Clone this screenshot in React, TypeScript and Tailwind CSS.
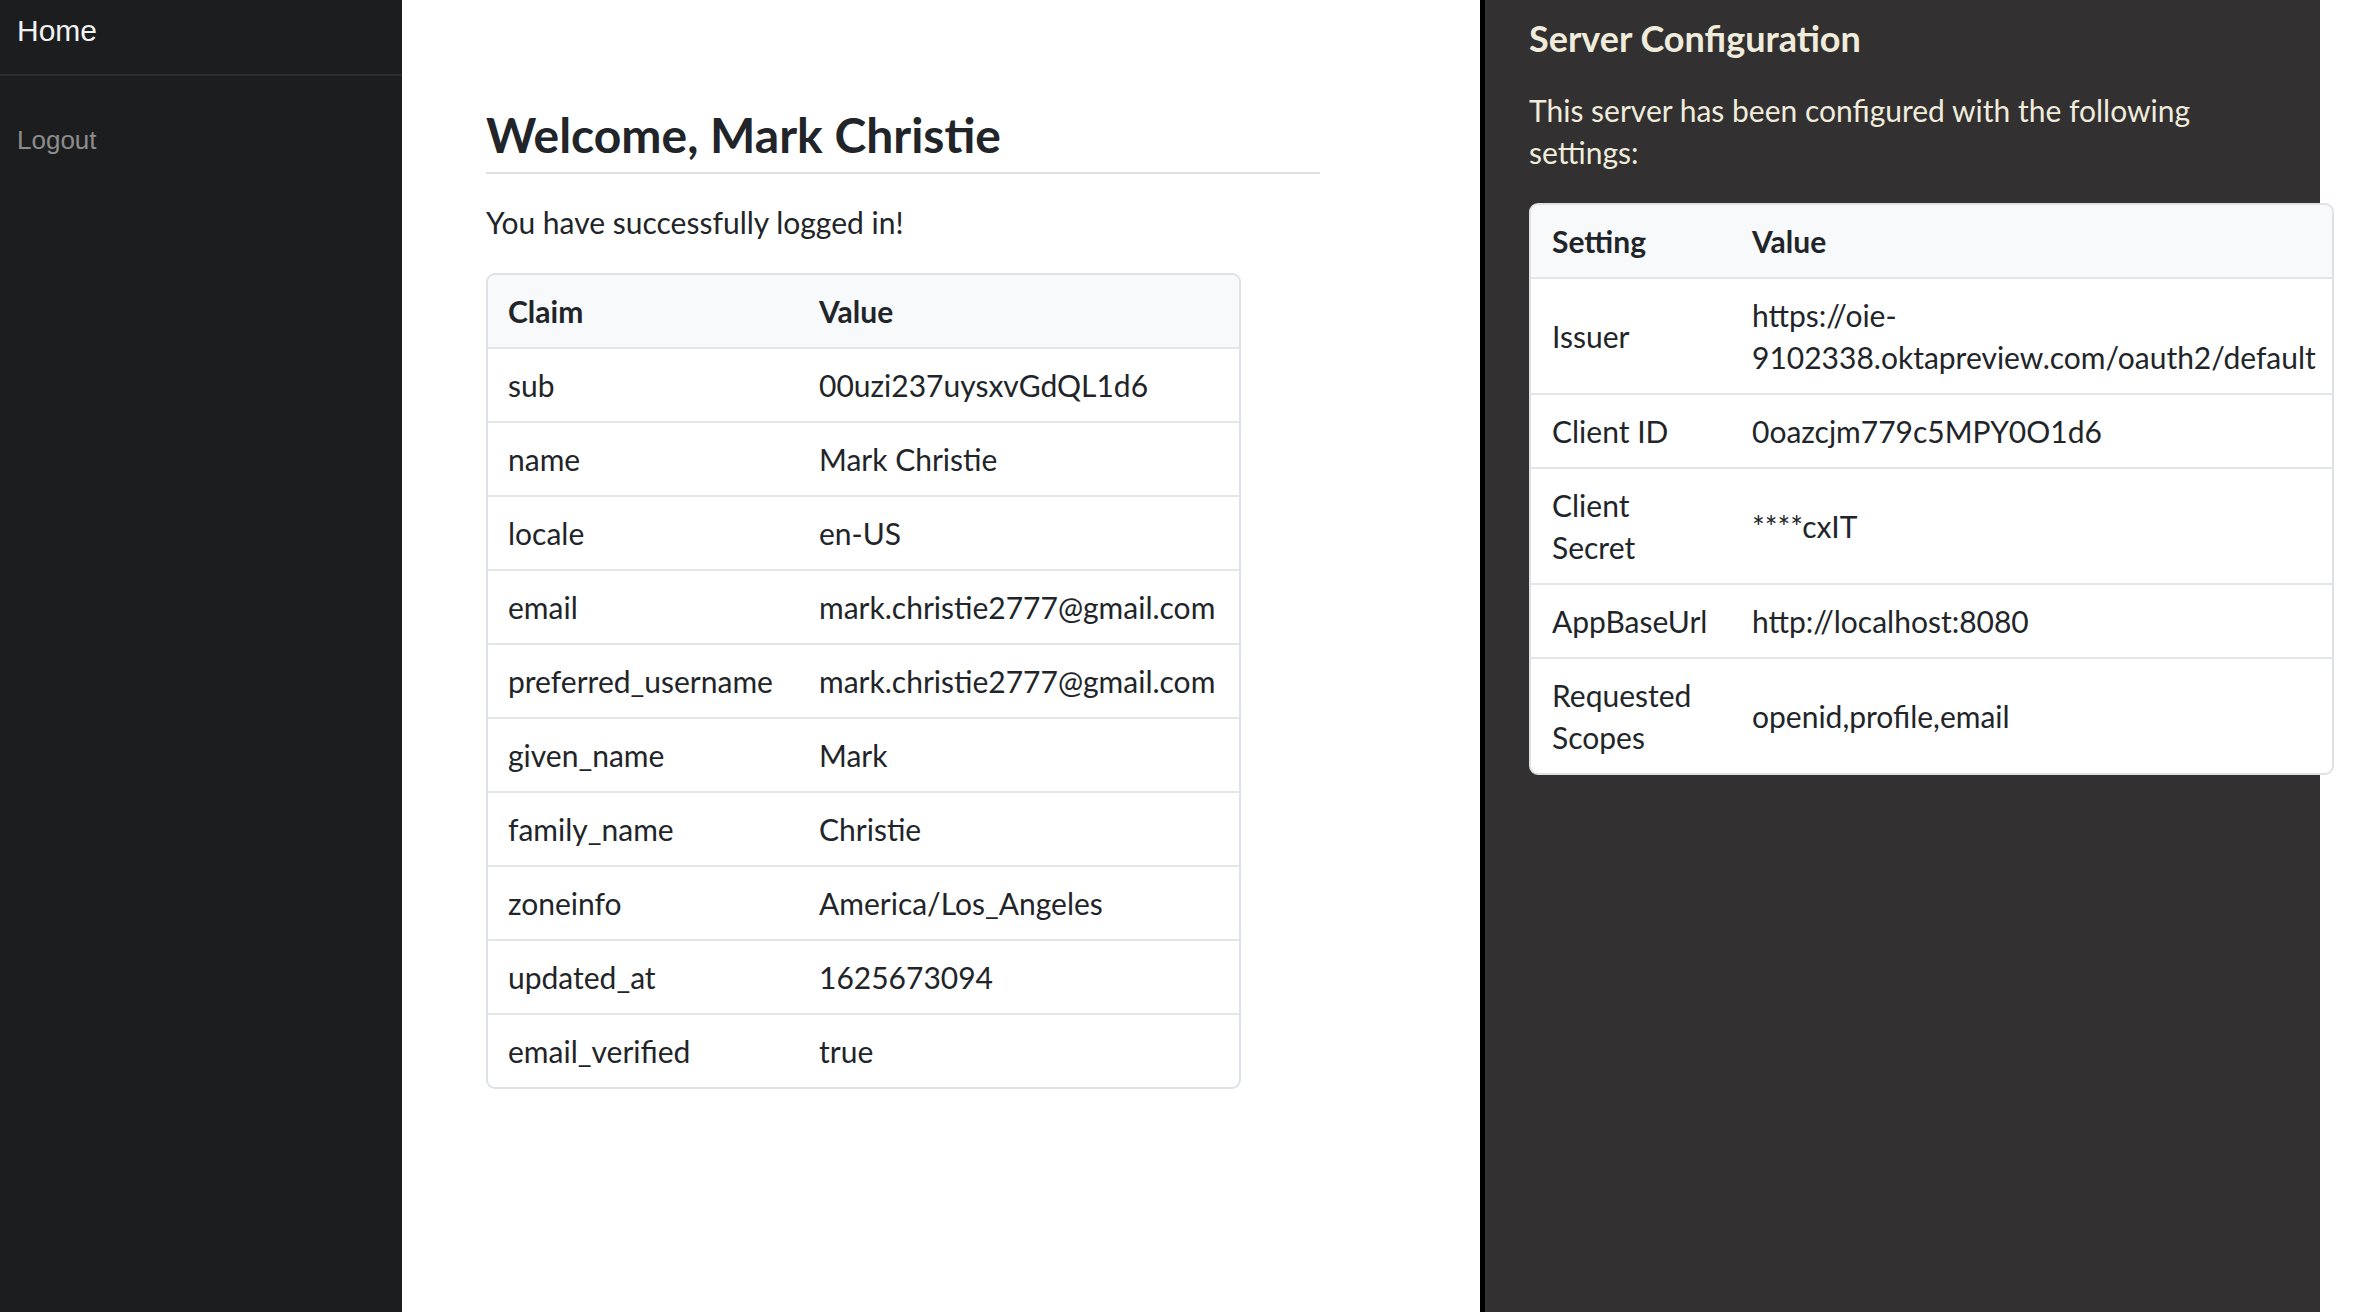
import React from 'react';

const claims: [string, string][] = [
  ['sub', '00uzi237uysxvGdQL1d6'],
  ['name', 'Mark Christie'],
  ['locale', 'en-US'],
  ['email', 'mark.christie2777@gmail.com'],
  ['preferred_username', 'mark.christie2777@gmail.com'],
  ['given_name', 'Mark'],
  ['family_name', 'Christie'],
  ['zoneinfo', 'America/Los_Angeles'],
  ['updated_at', '1625673094'],
  ['email_verified', 'true'],
];

const settings: [React.ReactNode, React.ReactNode][] = [
  ['Issuer', <>https://oie-<br />9102338.oktapreview.com/oauth2/default</>],
  ['Client ID', '0oazcjm779c5MPY0O1d6'],
  [<>Client<br />Secret</>, '****cxIT'],
  ['AppBaseUrl', 'http://localhost:8080'],
  [<>Requested<br />Scopes</>, 'openid,profile,email'],
];

export default function App() {
  return (
    <div className="flex h-[1312px] w-[2378px] bg-white font-['Lato',sans-serif] text-[#212529]">
      {/* sidebar */}
      <aside className="w-[402px] shrink-0 bg-[#1c1d1f] font-['Liberation_Sans',Arial,sans-serif]">
        <div className="h-[76px] border-b-2 border-[#2c2d2f] pl-[17px] pt-[13px] text-[30px] leading-[36px] text-[#f2f2f2]">
          Home
        </div>
        <div className="pl-[17px] pt-[46px] text-[26px] leading-[36px] text-[#8c8c8c]">Logout</div>
      </aside>

      {/* main */}
      <main className="w-[1078px] shrink-0 pl-[84px] pt-[106px]">
        <div className="w-[834px]">
          <h2 className="border-b-2 border-[#e0e0e0] pb-[8px] text-[48px] font-bold leading-[58px]">
            Welcome, Mark Christie
          </h2>
          <p className="mt-[27px] text-[30px] leading-[42px]">You have successfully logged in!</p>
          <div className="mt-[30px] w-[755px] overflow-hidden rounded-[9px] border-2 border-[#dee2e6]">
            <table className="w-full border-collapse text-left text-[30px] leading-[42px]">
              <thead>
                <tr className="bg-[#f8f9fa]">
                  <th className="w-[311px] px-[20px] py-[15px] font-bold">Claim</th>
                  <th className="px-[20px] py-[15px] font-bold">Value</th>
                </tr>
              </thead>
              <tbody>
                {claims.map(([k, v]) => (
                  <tr key={k} className="border-t-2 border-[#e3e5e8]">
                    <td className="px-[20px] py-[15px]">{k}</td>
                    <td className="px-[20px] py-[15px]">{v}</td>
                  </tr>
                ))}
              </tbody>
            </table>
          </div>
        </div>
      </main>

      {/* server config panel */}
      <section className="w-[840px] shrink-0 border-l-[5px] border-black bg-[#323031] pl-[44px] pr-[44px] pt-[14px]">
        <h3 className="text-[36px] font-bold leading-[48px] text-[#f0ecdc]">Server Configuration</h3>
        <p className="mt-[27px] text-[30px] leading-[42px] text-[#f0ecdc]">
          This server has been configured with the following settings:
        </p>
        <div className="mt-[30px] w-[805px] overflow-hidden rounded-[9px] border-2 border-[#dee2e6] bg-white">
          <table className="w-full border-collapse text-left text-[30px] leading-[42px]">
            <thead>
              <tr className="bg-[#f8f9fa]">
                <th className="w-[200px] px-[21px] py-[15px] font-bold">Setting</th>
                <th className="py-[15px] pl-[21px] pr-[12px] font-bold">Value</th>
              </tr>
            </thead>
            <tbody>
              {settings.map(([k, v], i) => (
                <tr key={i} className="border-t-2 border-[#e3e5e8]">
                  <td className="px-[21px] py-[15px] align-middle">{k}</td>
                  <td className="py-[15px] pl-[21px] pr-[12px] align-middle">{v}</td>
                </tr>
              ))}
            </tbody>
          </table>
        </div>
      </section>
    </div>
  );
}
